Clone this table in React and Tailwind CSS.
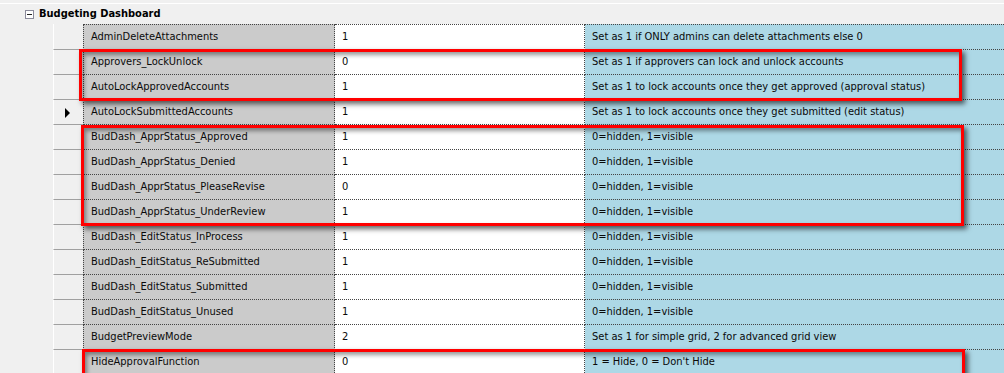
import React from 'react';

const rows = [
  ['AdminDeleteAttachments', '1', 'Set as 1 if ONLY admins can delete attachments else 0'],
  ['Approvers_LockUnlock', '0', 'Set as 1 if approvers can lock and unlock accounts'],
  ['AutoLockApprovedAccounts', '1', 'Set as 1 to lock accounts once they get approved (approval status)'],
  ['AutoLockSubmittedAccounts', '1', 'Set as 1 to lock accounts once they get submitted (edit status)'],
  ['BudDash_ApprStatus_Approved', '1', '0=hidden, 1=visible'],
  ['BudDash_ApprStatus_Denied', '1', '0=hidden, 1=visible'],
  ['BudDash_ApprStatus_PleaseRevise', '0', '0=hidden, 1=visible'],
  ['BudDash_ApprStatus_UnderReview', '1', '0=hidden, 1=visible'],
  ['BudDash_EditStatus_InProcess', '1', '0=hidden, 1=visible'],
  ['BudDash_EditStatus_ReSubmitted', '1', '0=hidden, 1=visible'],
  ['BudDash_EditStatus_Submitted', '1', '0=hidden, 1=visible'],
  ['BudDash_EditStatus_Unused', '1', '0=hidden, 1=visible'],
  ['BudgetPreviewMode', '2', 'Set as 1 for simple grid, 2 for advanced grid view'],
  ['HideApprovalFunction', '0', '1 = Hide, 0 = Don\'t Hide'],
];

// current row gets the record pointer
const CURRENT = 3;

function Row({ name, value, desc, first, current }) {
  const top = first ? 'border-t border-dotted border-t-[#444]' : '';
  return (
    <div className={`flex ${first ? 'h-[26px]' : 'h-[25px]'}`}>
      <div className="w-[30px] flex items-center justify-center border-l border-l-white border-b border-b-[#a0a0a0]">
        {current && (
          <svg width="5" height="10" viewBox="0 0 5 10" className="ml-[-2px] mt-[2px]">
            <polygon points="0,0 5,5 0,10" fill="#000" />
          </svg>
        )}
      </div>
      <div className={`w-[252px] flex items-center pl-[7px] pt-px bg-[#cbcbcb] border-l border-r border-b border-dotted border-[#444] ${top}`}>
        {name}
      </div>
      <div className={`w-[250px] flex items-center pl-[7px] pt-px bg-white border-r border-b border-dotted border-[#444] ${top}`}>
        {value}
      </div>
      <div className={`flex-1 flex items-center pl-[7px] pt-px bg-[#add8e6] border-b border-dotted border-[#444] ${top}`}>
        {desc}
      </div>
    </div>
  );
}

export default function App() {
  return (
    <div className="relative w-[1004px] h-[373px] overflow-hidden bg-[#f0f0f0] text-[11px] text-[#0a0a0a] font-['Tahoma','DejaVu_Sans_Condensed','DejaVu_Sans',sans-serif]">
      <div className="mt-[3px] h-px bg-white" />
      <div className="flex items-center h-[20px] pl-[25px]">
        <div className="w-[9px] h-[9px] border border-[#8a8a9a] bg-white flex items-center justify-center">
          <div className="w-[5px] h-px bg-[#222]" />
        </div>
        <span className="ml-[5px] font-bold text-black">Budgeting Dashboard</span>
      </div>

      <div className="pl-[53px]">
        {rows.map(([name, value, desc], i) => (
          <Row
            key={name}
            name={name}
            value={value}
            desc={desc}
            first={i === 0}
            current={i === CURRENT}
          />
        ))}
      </div>

      {/* highlight boxes drawn over the grid */}
      <div className="absolute left-[79px] top-[49px] w-[883px] h-[52px] border-[3px] border-[#ff0000] shadow-[3px_3px_5px_rgba(0,0,0,0.6),inset_2px_3px_4px_rgba(0,0,0,0.4)]" />
      <div className="absolute left-[81px] top-[125px] w-[883px] h-[101px] border-[3px] border-[#ff0000] shadow-[3px_3px_5px_rgba(0,0,0,0.6),inset_2px_3px_4px_rgba(0,0,0,0.4)]" />
      <div className="absolute left-[82px] top-[349px] w-[883px] h-[30px] border-[3px] border-[#ff0000] shadow-[3px_3px_5px_rgba(0,0,0,0.6),inset_2px_3px_4px_rgba(0,0,0,0.4)]" />
    </div>
  );
}
